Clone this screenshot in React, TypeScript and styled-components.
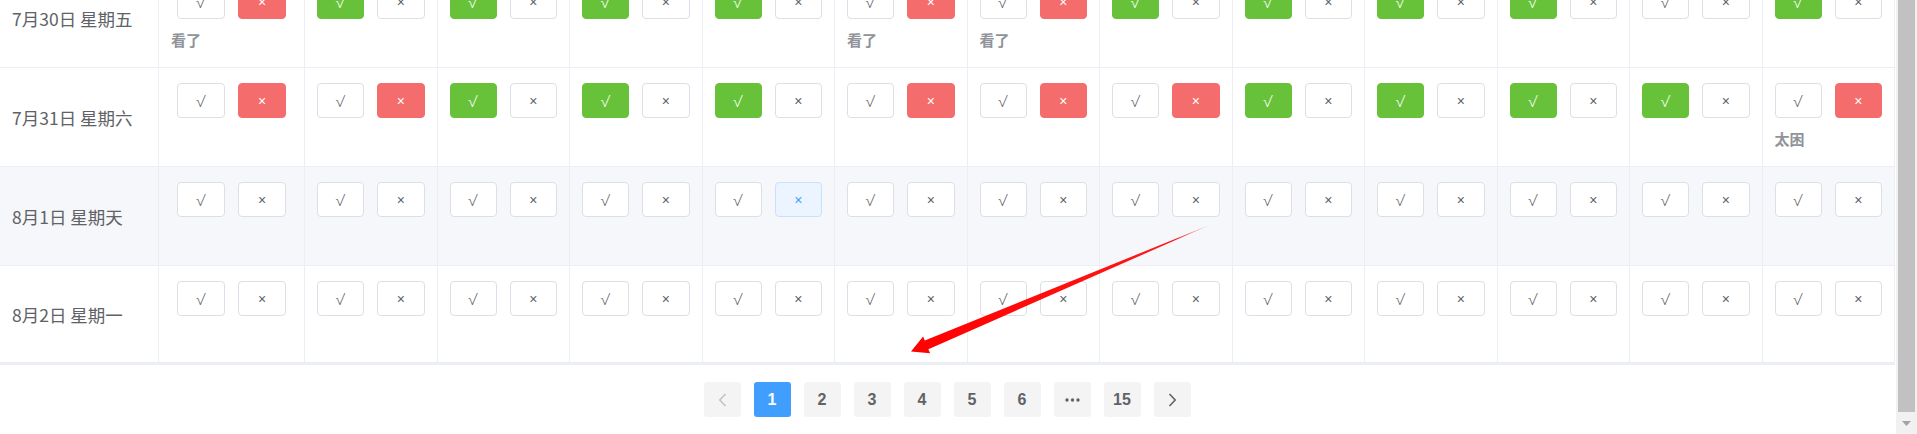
import React from 'react';
import styled, { createGlobalStyle, css } from 'styled-components';

const GlobalStyle = createGlobalStyle`
  html, body { margin: 0; padding: 0; background: #ffffff; }
  body {
    font-family: "Liberation Sans", "Noto Sans CJK SC", sans-serif;
    color: #606266;
  }
  #root { width: 1917px; height: 434px; }
`;

type Variant = 'plain' | 'success' | 'danger' | 'hover';

const Page = styled.div`
  position: relative;
  display: flex;
  width: 1917px;
  height: 434px;
  overflow: hidden;
  background: #ffffff;
`;

const Main = styled.div`
  width: 1896px;
  display: flex;
  flex-direction: column;
`;

const Viewport = styled.div`
  height: 365px;
  overflow: hidden;
`;

const Table = styled.div`
  width: 1895px;
  margin-top: -31px;
  border-bottom: 2px solid #ebeef5;
`;

const Row = styled.div<{ $h: number; $hover?: boolean }>`
  display: grid;
  grid-template-columns: 159px 146px repeat(12, 1fr);
  height: ${(p) => p.$h}px;
  background: ${(p) => (p.$hover ? '#f5f7fa' : '#ffffff')};
`;

const cellBase = css`
  box-sizing: border-box;
  border-right: 1px solid #ebeef5;
  border-bottom: 1px solid #ebeef5;
  min-width: 0;
`;

const DateCell = styled.div`
  ${cellBase};
  display: flex;
  align-items: center;
  padding-left: 12px;
  font-family: "Noto Sans CJK SC", "Liberation Sans", sans-serif;
  font-size: 17.5px;
  color: #606266;
  white-space: nowrap;
`;

const DataCell = styled.div`
  ${cellBase};
  padding: 15px 12px 0 12px;
`;

const ButtonGroup = styled.div`
  display: flex;
  justify-content: center;
  gap: 13px;
`;

const variants: Record<Variant, ReturnType<typeof css>> = {
  plain: css`
    background: #ffffff;
    border-color: #dcdfe6;
    color: #606266;
  `,
  success: css`
    background: #67c23a;
    border-color: #67c23a;
    color: #ffffff;
  `,
  danger: css`
    background: #f56c6c;
    border-color: #f56c6c;
    color: #ffffff;
  `,
  hover: css`
    background: #ecf5ff;
    border-color: #c6e2ff;
    color: #409eff;
  `,
};

const MarkButton = styled.button<{ $variant: Variant; $glyph: 'yes' | 'no' }>`
  box-sizing: border-box;
  width: 48px;
  height: 35px;
  padding: 0;
  border: 1px solid;
  border-radius: 4px;
  display: flex;
  align-items: center;
  justify-content: center;
  font-family: ${(p) =>
    p.$glyph === 'yes' ? '"Inter", "Roboto", sans-serif' : '"Liberation Sans", sans-serif'};
  font-size: ${(p) => (p.$glyph === 'yes' ? '16px' : '14px')};
  font-weight: ${(p) => (p.$glyph === 'yes' ? 200 : 400)};
  line-height: 1;
  cursor: pointer;
  ${(p) => variants[p.$variant]};
`;

const Note = styled.div`
  margin-top: 10px;
  line-height: 22px;
  font-family: "Noto Sans CJK SC", sans-serif;
  font-size: 15px;
  font-weight: 700;
  color: #909399;
  text-align: left;
`;

const Pager = styled.div`
  display: flex;
  justify-content: center;
  gap: 13px;
  margin-top: 17px;
  padding-right: 2px;
`;

const PageButton = styled.div<{ $active?: boolean; $disabled?: boolean }>`
  width: 37px;
  height: 35px;
  border-radius: 3px;
  display: flex;
  align-items: center;
  justify-content: center;
  font-family: "Liberation Sans", "Noto Sans CJK SC", sans-serif;
  font-size: 16px;
  font-weight: 700;
  background: ${(p) => (p.$active ? '#409eff' : '#f4f4f5')};
  color: ${(p) => (p.$active ? '#ffffff' : p.$disabled ? '#c0c4cc' : '#606266')};
`;

const Scrollbar = styled.div`
  width: 21px;
  background: #f1f1f1;
  display: flex;
  flex-direction: column;
`;

const Thumb = styled.div`
  flex: 1;
  margin: 0 2px 1px 2px;
  background: #c1c1c1;
`;

const ScrollArrow = styled.div`
  height: 21px;
  display: flex;
  align-items: center;
  justify-content: center;
`;

const Overlay = styled.svg`
  position: absolute;
  left: 0;
  top: 0;
  pointer-events: none;
`;

type CellData = { code: string; note?: string };

const rows: { date: string; h: number; hover?: boolean; cells: CellData[] }[] = [
  {
    date: '7月30日 星期五',
    h: 99,
    cells: 'rggggrrgggg-g'.split('').map((c) => ({ code: c })),
  },
  {
    date: '7月31日 星期六',
    h: 99,
    cells: 'rrgggrrrggggr'.split('').map((c) => ({ code: c })),
  },
  {
    date: '8月1日 星期天',
    h: 99,
    hover: true,
    cells: '----h--------'.split('').map((c) => ({ code: c })),
  },
  {
    date: '8月2日 星期一',
    h: 97,
    cells: '-------------'.split('').map((c) => ({ code: c })),
  },
];

rows[0].cells[0].note = '看了';
rows[0].cells[5].note = '看了';
rows[0].cells[6].note = '看了';
rows[1].cells[12].note = '太困';

function Cell({ data }: { data: CellData }) {
  const yes: Variant = data.code === 'g' ? 'success' : 'plain';
  const no: Variant = data.code === 'r' ? 'danger' : data.code === 'h' ? 'hover' : 'plain';
  return (
    <DataCell>
      <ButtonGroup>
        <MarkButton $variant={yes} $glyph="yes">√</MarkButton>
        <MarkButton $variant={no} $glyph="no">×</MarkButton>
      </ButtonGroup>
      {data.note && <Note>{data.note}</Note>}
    </DataCell>
  );
}

const ChevronLeft = ({ color }: { color: string }) => (
  <svg width="9" height="14" viewBox="0 0 9 14">
    <polyline points="7.5,1 1.8,7 7.5,13" fill="none" stroke={color} strokeWidth="1.6" />
  </svg>
);

const ChevronRight = ({ color }: { color: string }) => (
  <svg width="9" height="14" viewBox="0 0 9 14">
    <polyline points="1.5,1 7.2,7 1.5,13" fill="none" stroke={color} strokeWidth="1.6" />
  </svg>
);

const MoreDots = () => (
  <svg width="15" height="4" viewBox="0 0 15 4">
    <circle cx="2" cy="2" r="1.7" fill="#606266" />
    <circle cx="7.5" cy="2" r="1.7" fill="#606266" />
    <circle cx="13" cy="2" r="1.7" fill="#606266" />
  </svg>
);

export default function App() {
  return (
    <>
      <GlobalStyle />
      <Page>
        <Main>
          <Viewport>
            <Table>
              {rows.map((r) => (
                <Row key={r.date} $h={r.h} $hover={r.hover}>
                  <DateCell>{r.date}</DateCell>
                  {r.cells.map((c, i) => (
                    <Cell key={i} data={c} />
                  ))}
                </Row>
              ))}
            </Table>
          </Viewport>
          <Pager>
            <PageButton $disabled>
              <ChevronLeft color="#c0c4cc" />
            </PageButton>
            <PageButton $active>1</PageButton>
            <PageButton>2</PageButton>
            <PageButton>3</PageButton>
            <PageButton>4</PageButton>
            <PageButton>5</PageButton>
            <PageButton>6</PageButton>
            <PageButton>
              <MoreDots />
            </PageButton>
            <PageButton>15</PageButton>
            <PageButton>
              <ChevronRight color="#606266" />
            </PageButton>
          </Pager>
        </Main>
        <Scrollbar>
          <Thumb />
          <ScrollArrow>
            <svg width="9" height="5" viewBox="0 0 9 5">
              <polygon points="0,0 9,0 4.5,5" fill="#a3a3a3" />
            </svg>
          </ScrollArrow>
        </Scrollbar>
        <Overlay width="1917" height="434" viewBox="0 0 1917 434">
          <defs>
            <linearGradient id="arrowFade" x1="1212" y1="224" x2="911" y2="351" gradientUnits="userSpaceOnUse">
              <stop offset="0" stopColor="#ff0000" stopOpacity="0.15" />
              <stop offset="0.12" stopColor="#ff0000" stopOpacity="0.9" />
              <stop offset="1" stopColor="#ff0000" stopOpacity="1" />
            </linearGradient>
          </defs>
          <polygon
            points="911,351.5 930.1,353.2 928.4,349.2 1212,224 924.8,340.6 923.1,336.6"
            fill="url(#arrowFade)"
          />
        </Overlay>
      </Page>
    </>
  );
}
